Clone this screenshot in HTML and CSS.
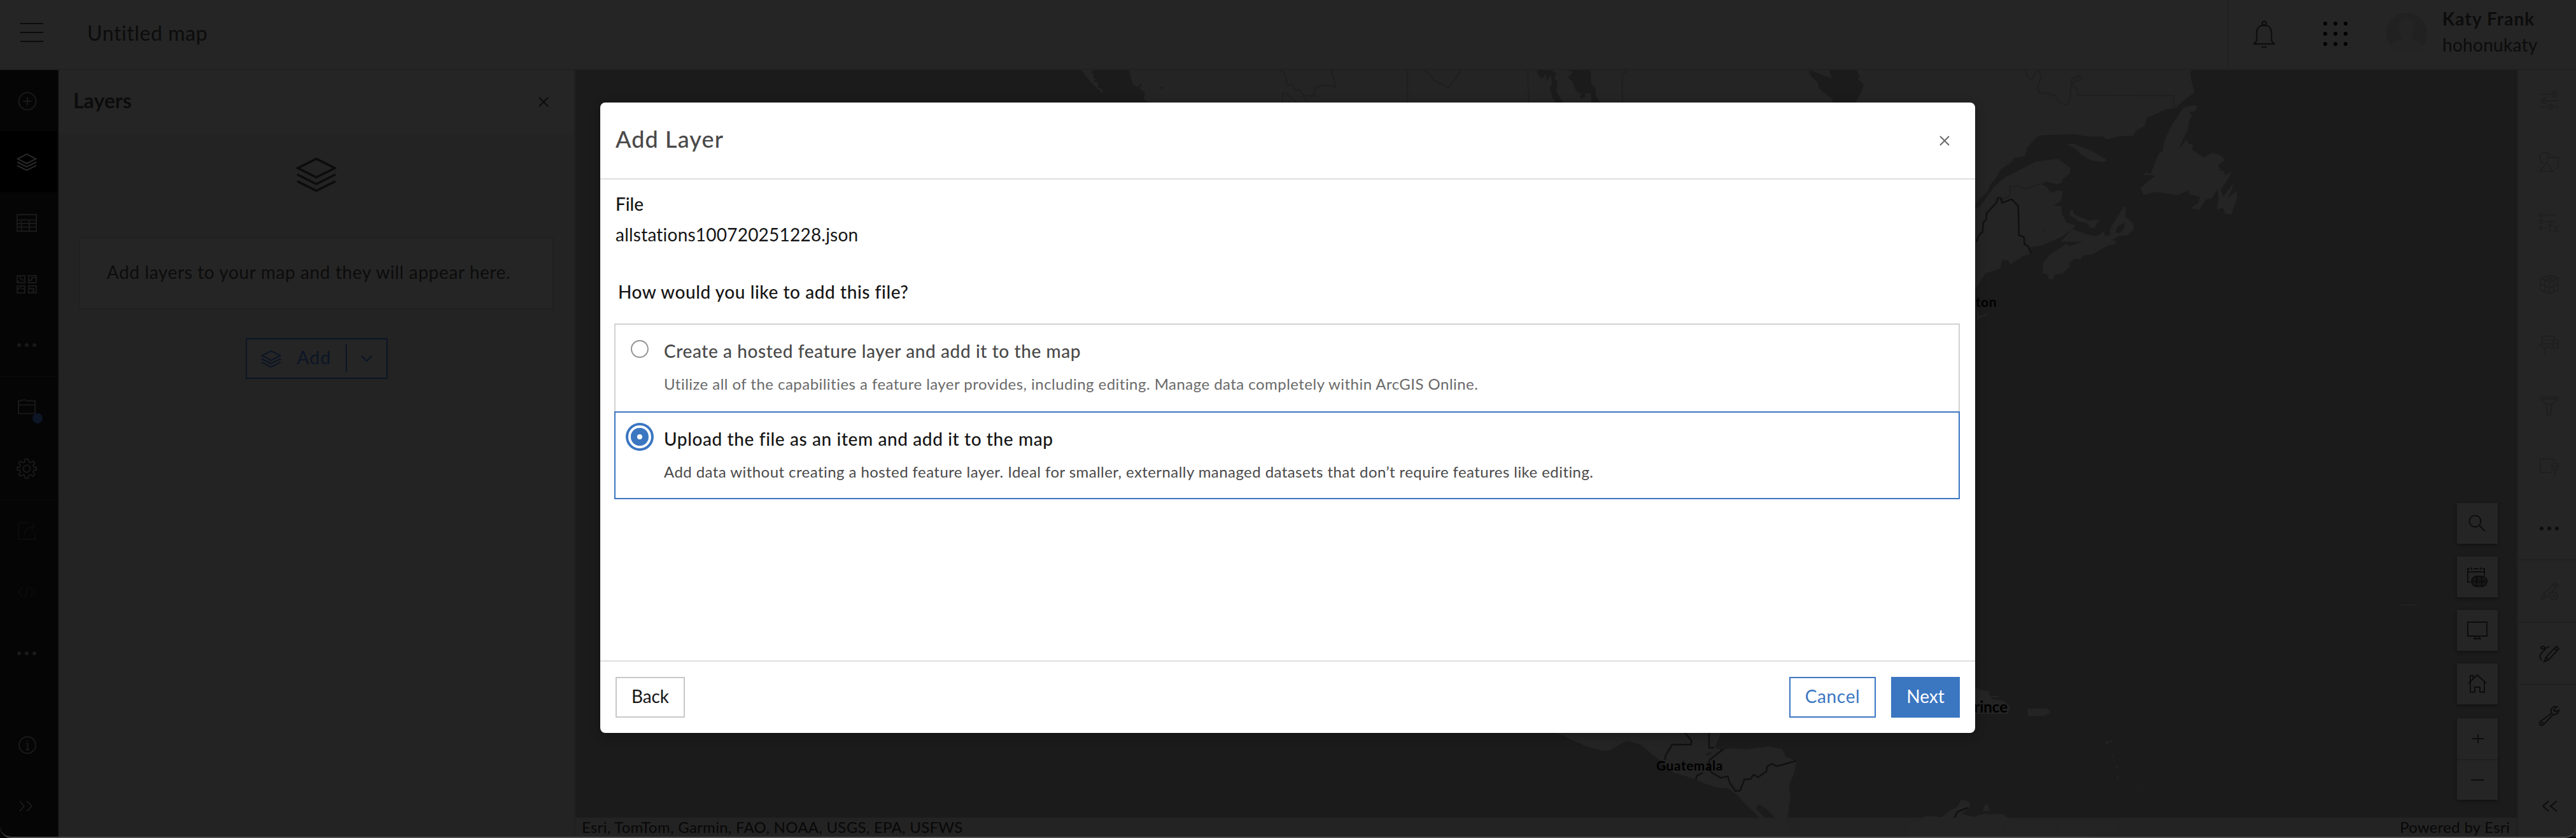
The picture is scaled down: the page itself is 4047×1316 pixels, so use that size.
FILE: index.html
```html
<!DOCTYPE html>
<html lang="en">
<head>
<meta charset="utf-8">
<title>Untitled map</title>
<link rel="stylesheet" href="styles.css">
</head>
<body>
<svg class="defs" width="0" height="0">
  <symbol id="layers" viewBox="0 0 32 32"><path d="M16 2.2 30.5 9.5 16 16.8 1.500 9.500ZM1 14.500 16 22 31 14.500M1 19.800 16 27.300 31 19.800"/></symbol>
  <symbol id="dots" viewBox="0 0 32 32"><g class="solid"><circle cx="4" cy="16" r="3"/><circle cx="16" cy="16" r="3"/><circle cx="28" cy="16" r="3"/></g></symbol>
  <symbol id="close" viewBox="0 0 16 16"><path d="M1 1 15 15M15 1 1 15"/></symbol>
</svg>
<div class="app">
  <header class="topbar">
    <svg class="menu" viewBox="0 0 36 30"><path d="M0 1H36M0 15H36M0 29H36"/></svg>
    <h1 class="map-title">Untitled map</h1>
    <div class="account">
      <svg class="bell" viewBox="0 0 36 44"><circle cx="18" cy="4.500" r="3"/><path d="M1 37H35C31 36 29.500 33 29.500 28V19C29.500 12 25 7.800 18 7.800S6.500 12 6.500 19V28C6.500 33 5 36 1 37ZM14.500 40.500C15.500 43.500 20.500 43.500 21.500 40.500"/></svg>
      <svg class="apps" viewBox="0 0 38 38"><g><circle cx="3" cy="3" r="3"/><circle cx="19" cy="3" r="3"/><circle cx="35" cy="3" r="3"/><circle cx="3" cy="19" r="3"/><circle cx="19" cy="19" r="3"/><circle cx="35" cy="19" r="3"/><circle cx="3" cy="35" r="3"/><circle cx="19" cy="35" r="3"/><circle cx="35" cy="35" r="3"/></g></svg>
      <svg class="avatar" viewBox="0 0 64 64"><circle class="disc" cx="32" cy="32" r="32"/><path class="person" d="M20 19C19 6 45 6 44 19C44 30 40 36 38 41L52 45C56 48 57 52 57 53A32 32 0 0 1 8 53C9 48 11 46 13 45L26 41C23 36 20 30 20 19Z"/></svg>
      <div class="user"><strong>Katy Frank</strong><span>hohonukaty</span></div>
    </div>
  </header>
  <div class="workspace">
    <nav class="rail left">
      <a><svg viewBox="0 0 32 32"><circle cx="17" cy="17" r="13.500"/><path d="M17 10.500V23.500M10.500 17H23.500"/></svg></a>
      <a class="active"><svg><use href="#layers"/></svg></a>
      <a><svg viewBox="0 0 32 32"><path d="M1 3H31V29H1ZM1 11.500H31M1 17H31M1 22.500H31M7.500 11.500V29M20 11.500V29"/></svg></a>
      <a><svg viewBox="0 0 32 32"><path d="M1 3H13V14H1ZM19 3H31V14H19ZM1 19H13V30H1ZM19 19H31V30H19ZM5 3C5 8 8 10 13 10M1 10L5 14M19 10H24V6H31M1 25C5 21 8 21 13 26M19 23H27V30M23 27H27"/></svg></a>
      <a><svg><use href="#dots"/></svg></a>
      <hr>
      <a class="badged"><svg viewBox="0 0 32 32"><path d="M3 5H6.500L9 3.500H14L16.500 5H29V27H3ZM3 12H29" transform="translate(0 1) scale(1 .9)"/></svg><i></i></a>
      <a><svg viewBox="0 0 32 32"><circle cx="16" cy="16" r="5.500"/><path d="M13.500 1H18.500L19.500 5.500 22 6.500 26 4 28.500 7.500 26 11 27 13.500 31 14V18L27 18.700 26 21.500 28.500 25 26 28 22 25.500 19.500 26.500 18.500 31H13.500L12.500 26.500 10 25.500 6 28 3.500 25 6 21.500 5 18.700 1 18V14L5 13.500 6 11 3.500 7.500 6 4 10 6.500 12.500 5.500Z"/></svg></a>
      <hr>
      <a class="disabled"><svg viewBox="0 0 32 32"><path d="M19 3H3V29H29V18M13 21C13 12 19 9 29 9M23 3 29 9 23 15"/></svg></a>
      <a class="disabled"><svg viewBox="0 0 32 32"><path d="M9 8 3 16 9 23M22 8 29 16 22 23M19 6 13 26"/></svg></a>
      <a><svg><use href="#dots"/></svg></a>
      <a class="push"><svg viewBox="0 0 32 32"><circle cx="17" cy="16" r="13"/><path d="M15 14H17.500V23.500M14 23.500H20M16.500 9.500H18.500"/></svg></a>
      <a><svg viewBox="0 0 32 32"><path d="M5 8 12 16 5 24M16 8 24 16 16 24"/></svg></a>
    </nav>
    <aside class="panel">
      <div class="panel-head"><h2>Layers</h2><svg class="x"><use href="#close"/></svg></div>
      <div class="panel-body">
        <svg class="hero"><use href="#layers"/></svg>
        <p class="empty">Add layers to your map and they will appear here.</p>
        <div class="add"><svg class="add-icon"><use href="#layers"/></svg><span>Add</span><svg class="chev" viewBox="0 0 18 10"><path d="M1 1 9 9 17 1"/></svg></div>
      </div>
    </aside>
    <main class="map">
      <svg class="basemap" viewBox="904 110 3050 1204" preserveAspectRatio="none">
        <g transform="translate(1650 100) scale(.9247 .3333)">
          <path class="land" d="M52 28H72L70 45 76 50 72 65 77 70 74 85 82 90 80 110 88 120 90 143 80 118 68 85ZM134 28H1600V200H166V180L158 165 161 135 152 118 155 90 149 110 141 100 137 70Z"/>
          <path class="water" d="M826 28H849L860 44 856 70 862 80 860 130 868 170 872 183H858L853 160 849 115 853 90 850 50 845 80 841 50 836 70 830 60ZM876 28H918L919 95 926 115 927 150 934 183H920L918 140 909 140 908 160 900 165 902 140 894 130 886 80 880 65 888 38ZM1289 28 1328 70 1323 28H1370L1376 65 1372 70 1382 100 1378 135 1368 183H1330L1328 165 1307 120 1304 90 1290 50ZM187 110 191 108 190 118 187 120Z"/>
          <path class="line" d="M390 28 398 42 403 105 410 95 416 125 423 122 430 150 448 152 450 115 458 106 470 102 485 110 478 40 483 28M394 183 395 140 400 138 418 183M430 150 437 183M607 28V183M635 28 648 55 650 75 676 114 699 28M811 28 813 183M982 28 972 52V183"/>
        </g>
        <g transform="translate(3080 0) scale(.6167 .4209)">
          <path class="land" d="M0 250H593L586 270 588 300 593 325 596 345 560 385 550 402 523 408 497 425 474 440 470 470 447 488 440 507 405 508 372 520 362 509 322 509 290 500 215 504 197 507 170 550 165 582 135 590 130 605 102 632 90 665 78 685 68 715 37 760H0Z"/>
          <path class="land" d="M37 780 47 775 87 695 112 663 192 603 247 593 279 625 280 645 260 668 258 680 247 688 218 677 206 686 223 700 228 720 247 710 261 713 256 750 238 767 257 770 258 795 270 830 294 843 262 880 210 915 178 923 182 945 160 955 127 987 120 970 105 972 102 1000 85 1010 65 1020 52 1045 42 1070H30ZM270 537 290 537 330 560 365 588 373 598 362 605 330 597 305 575 297 560ZM284 780 290 800 310 812 328 823 357 818 348 832 343 850 330 850 325 835 300 825 275 800ZM416 772 422 772 419 810 430 818 441 835 440 858 425 878 402 880 387 895 397 900 396 910 375 917 335 950 313 953 305 968 290 965 277 985 278 995 260 1020 240 1025 236 1042H225L220 1022 209 1020 211 978 228 950 270 910 278 918 312 902 255 902 284 855 318 872 345 882 365 865 368 880 380 878 382 850ZM590 393 603 396 598 415 583 418 590 430 582 455 578 490 570 510 556 555 577 520 580 535 592 540 590 560 605 573 620 588 640 570 660 578 675 597 658 615 660 635 672 640 674 655 691 640 680 672 662 710 670 735 695 682 692 705 680 740 702 712 706 735 690 800 675 798 668 775 652 783 658 740 655 705 640 740 625 745 608 782 584 777 605 760 610 735 584 725 580 710 555 728 495 716 466 727 458 700 497 655 466 652 474 640 484 650 505 573 515 565 518 530 537 470 550 440 568 402ZM42 1150 50 1180 68 1168V1178L50 1185 42 1200Z"/>
          <path class="water" d="M395 868 400 845 420 830 416 855 404 870ZM208 862 215 850 211 865Z"/>
          <path class="line" d="M165 262 170 285 182 298 190 270 200 263 205 290 197 325 200 345 215 350 222 343 230 357 240 353 250 380 268 392 277 384 280 345 284 292 296 290 300 280 311 297 288 305 288 325 298 330 297 356 542 357 545 403M105 745 126 730V697L145 692 165 704 206 685"/>
          <path class="border" d="M40 903 48 875 56 865 58 830 65 820 67 795 92 755 95 738 103 740 106 757 130 743 147 768 149 877 162 885 163 912 172 918 180 945"/>
        </g>
        <g transform="translate(3080 656) scale(.6167 .4209)">
          <path class="land" d="M35 1007 60 1018 70 1020 80 1050 110 1055 127 1078 120 1105H35ZM78 1038H97V1043H80ZM170 1085 222 1085 229 1098 215 1112 172 1114ZM370 1208 378 1207 376 1220H371ZM380 1200 388 1210H380ZM384 1250 389 1265 386 1267ZM392 1290 404 1308H398ZM397 1340 403 1337 400 1350ZM451 1378 456 1385 453 1390ZM58 1455 66 1438 75 1460 70 1468H58ZM0 1430 10 1425 26 1445 5 1465H0ZM15 1500 50 1480 105 1478 130 1500H400V1540L350 1550 330 1568H0V1510ZM1122 697H1166V700H1122ZM1286 696H1315V698H1286Z"/>
          <path class="water" d="M317 1107H325V1110H317Z"/>
        </g>
        <g transform="translate(2000 1000) scale(.7143 .3333)">
          <path class="land" d="M600 430 640 468 687 515 725 538 740 535 778 490 808 508 838 560 860 600 880 640 928 670 945 688 975 710 1000 714 1018 740 1040 790 1072 855 1068 948H1155L1130 880 1135 800 1138 760 1135 700 1147 640 1150 585 1128 565 1120 530 1090 517 1040 530 1005 525 985 535 972 520 990 430ZM1395 948 1400 880 1420 865 1437 843 1470 850 1485 825 1505 800 1513 770 1530 775 1533 800 1515 835 1545 850 1568 830V948Z"/>
          <path class="water" d="M1062 810 1067 787 1085 810 1112 870 1100 865 1080 850ZM953 550 965 540 962 555 953 560Z"/>
          <path class="border" d="M905 450 920 488V508H878L863 560 862 580M959 453V523H970M990 530 960 580 957 620 965 640 985 665 1000 657 1005 690 1017 727 1027 725 1037 672 1050 670 1057 650 1067 662 1085 635 1087 610 1098 598 1108 610 1150 585M930 672 932 655 945 640M1528 805 1505 825 1498 855"/>
        </g>
        <g class="place"><text x="3137" y="482" text-anchor="end">Boston</text><text x="3154" y="1119" text-anchor="end" class="big">Prince</text><text x="2602" y="1210">Guatemala</text></g>
        <text class="place big faint" x="3144" y="1308">Caracas</text>
      </svg>
      <div class="tools">
        <b><svg viewBox="0 0 32 32"><circle cx="12.500" cy="12.500" r="9"/><path d="M19 19 28 28"/></svg></b>
        <b><svg viewBox="0 0 32 32"><path d="M5 24H1V3H4M10 3H18M24 3H27V14M1 8H27M7 1V5M21 1V5"/><rect class="globe" x="7" y="15" width="24" height="16" rx="8"/><path d="M7 23H31M15 15V31M23 15V31"/></svg></b>
        <b><svg viewBox="0 0 32 32"><path d="M1 3H31V25H1ZM13 25V29M19 25V29M10 29H22"/></svg></b>
        <b><svg viewBox="0 0 32 32"><path d="M2 15 16 2 30 15M5 13V29H12V21H20V29H27V13M5 13V3H9.500V8"/></svg></b>
        <div class="zoom"><b><svg viewBox="0 0 32 32"><path d="M8 16H26M17 9V23"/></svg></b><b><svg viewBox="0 0 32 32"><path d="M6 16H26"/></svg></b></div>
      </div>
      <div class="credits"><span>Esri, TomTom, Garmin, FAO, NOAA, USGS, EPA, USFWS</span><span class="powered">Powered by Esri</span></div>
    </main>
    <nav class="rail right">
      <a><svg viewBox="0 0 32 32"><path d="M2 6H22M26 6H30M22 2H26V10H22ZM2 16H6M10 16H30M6 12H10V20H6ZM2 26H16M20 26H30M16 22H20V30H16Z"/></svg></a>
      <a><svg viewBox="0 0 32 32"><path d="M17 6A8.500 8.500 0 1 0 7 18M14 14V9H30V26H24M12 17 22 31H1Z"/></svg></a>
      <a><svg viewBox="0 0 32 32"><path d="M1 2H5V6H1ZM9 4H26M1 12H5V16H1ZM9 14H26M1 22H5V26H1ZM9 24H13"/><path d="M21 13C17 12 18 18 17 30M14 20H21M23 20 31 31M31 20 23 31"/></svg></a>
      <a><svg viewBox="0 0 32 32"><path d="M16 2 30 7V25L16 31 2 25V7ZM2 7 16 13 30 7M16 13V31M2 16 16 22 30 16M9 10V28M23 10V28M9 4.500 23 10M23 4.500 9 10"/></svg></a>
      <a><svg viewBox="0 0 32 32"><path d="M5 12V2H24V8M9 8H30V21H18M2 14H16V17L12 20H6L2 17ZM9 20V31M22 8V21M18 14H30"/></svg></a>
      <a><svg viewBox="0 0 32 32"><path d="M2 2H30V5L20 13 18 30H13L11 13 2 5ZM2 5H30M11 13H20"/></svg></a>
      <a><svg viewBox="0 0 32 32"><path d="M19 24H2V3H24V8M20 10H30V19H20ZM20 14H30M25 19V31"/></svg></a>
      <a class="on"><svg><use href="#dots"/></svg></a>
      <hr>
      <a><svg viewBox="0 0 32 32"><path d="M3 30 7 21 25 3 30 7 12 25ZM22 6 27 10M7 21 12 25"/><circle cx="23" cy="24" r="6"/><circle cx="23" cy="24" r="1"/></svg></a>
      <hr>
      <a class="on"><svg viewBox="0 0 32 32"><path d="M8 29 11 22 27 5 31 9 15 26ZM24 8 28 12M11 22 15 26M4 27C-3 19 6 14 9 10 12 5 4 4 3 7 2 11 11 9 16 5"/></svg></a>
      <hr>
      <a class="on"><svg viewBox="0 0 32 32"><path d="M28 2C21 0 17 6 20 12L2 25C-1 29 3 33 7 30L22 14C27 15 31 12 31 7L26 10 23 7Z"/><circle cx="5" cy="27" r=".8"/></svg></a>
      <a class="on push"><svg viewBox="0 0 32 32"><path d="M15 8 6 16 15 24M28 8 18 16 28 24"/></svg></a>
    </nav>
  </div>
  <div class="window-edge"></div>
</div>

<section class="dialog">
  <header class="dialog-head"><h2>Add Layer</h2><svg class="x"><use href="#close"/></svg></header>
  <div class="dialog-body">
    <p class="label file-label">File</p>
    <p class="file">allstations100720251228.json</p>
    <p class="label question">How would you like to add this file?</p>
    <div class="options">
      <div class="option first">
        <i class="radio"></i>
        <div><p class="opt-title">Create a hosted feature layer and add it to the map</p><p class="opt-desc">Utilize all of the capabilities a feature layer provides, including editing. Manage data completely within ArcGIS Online.</p></div>
      </div>
      <div class="option selected">
        <i class="radio"></i>
        <div><p class="opt-title">Upload the file as an item and add it to the map</p><p class="opt-desc">Add data without creating a hosted feature layer. Ideal for smaller, externally managed datasets that don’t require features like editing.</p></div>
      </div>
    </div>
  </div>
  <footer class="dialog-foot"><span class="btn back">Back</span><span class="btn cancel">Cancel</span><span class="btn next">Next</span></footer>
</section>
</body>
</html>
```
FILE: styles.css
```css
* { box-sizing: border-box; }
body { margin: 0; width: 4047px; height: 1316px; overflow: hidden; position: relative; background: #050505; font: 28px "Lato", sans-serif; color: #0c0c0c; }
h1, h2, p { margin: 0; font-weight: 400; white-space: nowrap; }
svg { display: block; fill: none; stroke: currentColor; stroke-width: 2; flex: none; }
.solid { fill: currentColor; stroke: none; }
.defs { position: absolute; }
.app { height: 1316px; display: flex; flex-direction: column; position: relative; }

/* top bar */
.topbar { height: 110px; flex: none; background: #252525; border-bottom: 2px solid #212121; display: flex; align-items: center; padding-left: 32px; }
.menu { width: 36px; height: 30px; margin-bottom: 6px; }
.map-title { font-size: 32px; line-height: 40px; letter-spacing: .6px; margin-left: 69px; padding-bottom: 5px; }
.account { margin-left: auto; width: 548px; height: 108px; border-left: 2px solid #202020; padding-left: 38px; display: flex; align-items: center; }
.bell { width: 36px; height: 44px; }
.apps { width: 38px; height: 38px; margin: 0 0 3px 75px; }
.apps g { fill: #000; stroke: none; }
.avatar { width: 64px; height: 64px; margin: 0 0 4px 61px; stroke: none; }
.disc { fill: #212121; }
.person { fill: #242424; }
.user { margin-left: 24px; padding-bottom: 9px; display: flex; flex-direction: column; line-height: 41px; white-space: nowrap; }
.user strong { letter-spacing: 1.1px; }
.user span { letter-spacing: .3px; }

/* rails */
.workspace { flex: 1; display: flex; min-height: 0; padding-bottom: 2px; }
.rail { display: flex; flex-direction: column; flex: none; }
.rail a { height: 96px; flex: none; display: flex; align-items: center; justify-content: center; position: relative; }
.rail svg { width: 32px; height: 32px; }
.rail hr { border: 0; height: 2px; width: 100%; margin: 0; flex: none; }
.rail .push { margin-top: auto; }
.left { width: 92px; background: #050505; border-right: 2px solid #0a0a0a; color: #191919; }
.left a { padding-right: 6px; }
.left hr { background: #090909; }
.left .active { background: #000; color: #2a2a2a; padding-top: 3px; }
.left .disabled { color: #0b0b0b; }
.badged i { position: absolute; left: 51px; top: 57px; width: 16px; height: 16px; border-radius: 50%; background: #0c1626; }
.right { width: 93px; background: #252525; border-left: 2px solid #202020; color: #1f1f1f; }
.right a { padding-left: 7px; }
.right hr { background: #202020; }
.right .on { color: #0d0d0d; }

/* layers panel */
.panel { width: 812px; flex: none; background: #232323; border-right: 2px solid #202020; display: flex; flex-direction: column; }
.panel-head { height: 100px; background: #252525; display: flex; align-items: center; justify-content: space-between; padding: 0 40px 0 23px; }
.panel-head h2 { font-size: 32px; font-weight: 700; letter-spacing: 0; padding-bottom: 5px; }
.x { width: 16px; height: 16px; }
.panel-body { display: flex; flex-direction: column; align-items: center; }
.hero { width: 64px; height: 64px; margin-top: 35px; stroke-width: 1.8; }
.empty { width: 746px; height: 114px; margin-top: 63px; border: 2px solid #202020; background: #252525; display: flex; align-items: center; justify-content: center; padding: 0 24px 4px 0; letter-spacing: .62px; }
.add { width: 223px; height: 64px; margin-top: 45px; border: 2px solid #0b1525; background: #252525; color: #0b1525; display: flex; align-items: center; padding-left: 22px; }
.add-icon { width: 32px; height: 32px; margin-top: 3px; }
.add span { margin-left: 25px; height: 44px; line-height: 40px; width: 78px; border-right: 2px solid #0b1525; letter-spacing: 1.3px; }
.chev { width: 18px; height: 10px; margin-left: 22px; }

/* map */
.map { flex: 1; position: relative; background: #1b1b1b; display: flex; flex-direction: column; justify-content: flex-end; overflow: hidden; }
.basemap { position: absolute; inset: 0; width: 100%; height: 100%; }
.basemap path { vector-effect: non-scaling-stroke; stroke: none; }
.basemap .land { fill: #242424; }
.basemap .water { fill: #1b1b1b; }
.basemap .line { stroke: #1f1f1f; }
.basemap .border { stroke: #111; stroke-width: 2.5; }
.place { font: 700 21px "Lato", sans-serif; fill: #000; stroke: none; letter-spacing: .5px; }
.place.big, .place .big { font-size: 24px; letter-spacing: 0; }
.place.faint { fill: #1b1b1b; letter-spacing: 1.2px; }
.tools { position: relative; align-self: flex-end; margin: 0 30px 28px 0; display: flex; flex-direction: column; gap: 20px; color: #0d0d0d; }
.tools b { width: 64px; height: 64px; background: #252525; box-shadow: 0 2px 4px #111; display: flex; align-items: center; justify-content: center; }
.tools svg { width: 32px; height: 32px; }
.globe { fill: #171717; }
.zoom { display: flex; flex-direction: column; margin-top: 2px; box-shadow: 0 2px 4px #111; }
.zoom b { box-shadow: none; }
.zoom b + b { border-top: 2px solid #1f1f1f; }
.credits { position: relative; height: 30px; flex: none; background: rgba(36,36,36,.85); display: flex; justify-content: space-between; align-items: center; padding: 0 11px 2px 10px; font-size: 24px; line-height: 27px; letter-spacing: .28px; white-space: nowrap; color: #080808; }
.window-edge { position: absolute; inset: auto 0 0 0; height: 24px; border-bottom: 2px solid #484848; border-radius: 0 0 18px 18px; }

/* dialog */
.dialog { position: absolute; left: 943px; top: 161px; width: 2160px; height: 990px; background: #fff; border-radius: 8px; box-shadow: 0 4px 16px rgba(0,0,0,.3); display: flex; flex-direction: column; color: #151515; }
.dialog-head { height: 121px; flex: none; border-bottom: 2px solid #dfdfdf; display: flex; align-items: center; justify-content: space-between; padding: 0 40px 0 24px; color: #4a4a4a; }
.dialog-head h2 { font-size: 36px; font-weight: 500; letter-spacing: 1.1px; padding-bottom: 5px; }
.dialog-head .x { color: #6a6a6a; }
.dialog-body { flex: 1; padding: 14px 24px 0 22px; line-height: 48px; }
.label { font-weight: 500; }
.file-label { padding-left: 2px; }
.file { padding-left: 2px; letter-spacing: .22px; }
.question { margin: 42px 0 26px 6px; letter-spacing: .56px; }
.option { height: 138px; border: 2px solid #d2d2d2; display: flex; padding-left: 24px; }
.first { border-bottom: 0; }
.radio { width: 28px; height: 28px; flex: none; margin: 24px 24px 0 0; border: 2px solid #959595; border-radius: 50%; }
.opt-title { margin-top: 21px; line-height: 40px; font-weight: 500; letter-spacing: .58px; color: #4a4a4a; }
.opt-desc { margin-top: 14px; font-size: 24px; line-height: 36px; letter-spacing: .46px; color: #6a6a6a; }
.selected { border-color: #3b76c1; }
.selected .radio { border: 10px solid #3b76c1; box-shadow: 0 0 0 4px #fff, 0 0 0 8px #3b76c1; }
.selected .opt-title { color: #151515; letter-spacing: .6px; }
.selected .opt-desc { color: #4a4a4a; letter-spacing: .43px; }
.dialog-foot { height: 114px; flex: none; border-top: 2px solid #dfdfdf; display: flex; align-items: center; padding: 0 24px; }
.btn { height: 64px; border: 2px solid #3b76c1; display: flex; align-items: center; justify-content: center; padding-bottom: 4px; }
.back { width: 109px; border-color: #c8c8c8; letter-spacing: -.1px; }
.cancel { width: 136px; margin-left: auto; color: #3b76c1; letter-spacing: .65px; }
.next { width: 108px; margin-left: 24px; background: #3b76c1; color: #fff; letter-spacing: 0; }
```
